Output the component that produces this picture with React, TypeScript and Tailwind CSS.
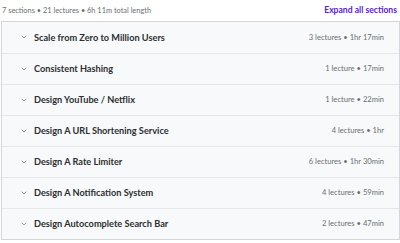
import { ChevronDown } from "lucide-react";

const sections = [
  { title: "Scale from Zero to Million Users", meta: "3 lectures • 1hr 17min" },
  { title: "Consistent Hashing", meta: "1 lecture • 17min" },
  { title: "Design YouTube / Netflix", meta: "1 lecture • 22min" },
  { title: "Design A URL Shortening Service", meta: "4 lectures • 1hr" },
  { title: "Design A Rate Limiter", meta: "6 lectures • 1hr 30min" },
  { title: "Design A Notification System", meta: "4 lectures • 59min" },
  { title: "Design Autocomplete Search Bar", meta: "2 lectures • 47min" },
];

export default function App() {
  return (
    <div className="w-[400px] h-[243px] bg-white pl-[1px] font-['Lato',sans-serif] overflow-hidden">
      <div className="flex items-center justify-between h-[21px] pl-[1px] pr-[3px]">
        <span className="text-[7.4px] text-[#6a6f73]">
          7 sections • 21 lectures • 6h 11m total length
        </span>
        <button className="text-[8.6px] font-bold text-[#5624d0]">
          Expand all sections
        </button>
      </div>
      <div className="border border-[#d1d7dc] w-[399px]">
        {sections.map((s, i) => (
          <div
            key={s.title}
            className={`flex items-center justify-between h-[31px] bg-[#f7f9fa] pl-[18px] pr-[15px] ${
              i > 0 ? "border-t border-[#e4e8eb]" : ""
            }`}
          >
            <div className="flex items-center gap-[6px]">
              <ChevronDown className="w-[8px] h-[8px] text-[#6a6f73]" strokeWidth={2} />
              <span className="text-[9.2px] font-bold text-[#2d2f31]">{s.title}</span>
            </div>
            <span className="text-[7.6px] text-[#6a6f73]">{s.meta}</span>
          </div>
        ))}
      </div>
    </div>
  );
}
